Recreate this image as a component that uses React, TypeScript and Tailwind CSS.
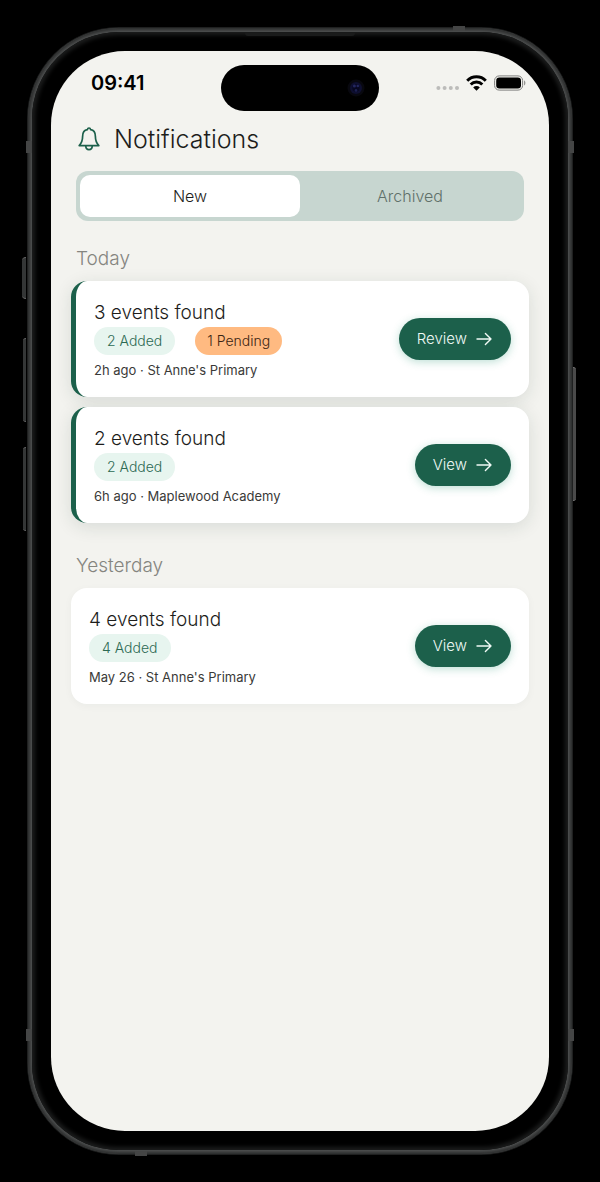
import { useState } from "react";

type Item = {
  id: number;
  title: string;
  added: number;
  pending?: number;
  meta: string;
  action: string;
  unread: boolean;
};

const groups: { label: string; items: Item[] }[] = [
  {
    label: "Today",
    items: [
      {
        id: 1,
        title: "3 events found",
        added: 2,
        pending: 1,
        meta: "2h ago · St Anne's Primary",
        action: "Review",
        unread: true,
      },
      {
        id: 2,
        title: "2 events found",
        added: 2,
        meta: "6h ago · Maplewood Academy",
        action: "View",
        unread: true,
      },
    ],
  },
  {
    label: "Yesterday",
    items: [
      {
        id: 3,
        title: "4 events found",
        added: 4,
        meta: "May 26 · St Anne's Primary",
        action: "View",
        unread: false,
      },
    ],
  },
];

function StatusBar() {
  return (
    <div className="flex items-center justify-between pt-[14px] pr-[23px] pl-10">
      <span className="w-[130px] pb-[10px] text-[20px] leading-6 font-semibold text-black">
        09:41
      </span>
      {/* dynamic island */}
      <div className="flex h-[46px] w-[158px] items-center justify-end rounded-full bg-black pr-[14px]">
        <svg aria-hidden viewBox="0 0 18 18" className="h-[18px] w-[18px]">
          <circle cx="9" cy="9" r="8.5" fill="#08080f" />
          <circle cx="9" cy="9" r="6" fill="#0e0f30" />
          <circle cx="9" cy="9" r="3.6" fill="#070720" />
          <circle cx="7.4" cy="7" r="1.5" fill="#23265e" />
          <circle cx="10.8" cy="7" r="1.3" fill="#23265e" />
          <circle cx="9" cy="11.4" r="1.3" fill="#1c2050" />
        </svg>
      </div>
      <div className="flex w-[147px] items-center justify-end gap-[7px] pb-[10px]">
        <svg aria-hidden viewBox="0 0 23 16" className="h-4 w-[23px]" fill="#bcbcba">
          <circle cx="2.4" cy="13" r="2" />
          <circle cx="8.6" cy="13" r="2" />
          <circle cx="14.8" cy="13" r="2" />
          <circle cx="21" cy="13" r="2" />
        </svg>
        <svg
          aria-hidden
          viewBox="0 0 21 16"
          className="h-4 w-[21px]"
          fill="none"
          stroke="#000"
          strokeWidth="3"
        >
          <path d="M1.2 5.7a13.2 13.2 0 0 1 18.6 0" />
          <path d="M4.7 9.5a8.2 8.2 0 0 1 11.6 0" />
          <path d="M10.5 15.8 7.2 12.5a4.6 4.6 0 0 1 6.6 0z" fill="#000" stroke="none" />
        </svg>
        <svg aria-hidden viewBox="0 0 32 16" className="h-4 w-8">
          <rect x="0.6" y="0.9" width="28" height="14.2" rx="4.6" fill="none" stroke="#7f7f7d" />
          <rect x="2.2" y="2.6" width="24.8" height="10.8" rx="3.2" fill="#000" />
          <path d="M30.2 5.6c1.5.6 1.5 4.2 0 4.8z" fill="#7f7f7d" />
        </svg>
      </div>
    </div>
  );
}

function Card({ item }: { item: Item }) {
  return (
    <li
      className={
        item.unread
          ? "flex items-center justify-between rounded-2xl border-l-[5px] border-[#1c604b] bg-white px-[18px] shadow-[0_4px_18px_rgba(28,50,40,0.12)]"
          : "flex items-center justify-between rounded-2xl bg-white px-[18px] shadow-[0_2px_8px_rgba(28,50,40,0.04)]"
      }
    >
      <div className="pt-[18px] pb-3">
        <h3 className="text-[19px] leading-7 text-[#1d1d1b]">{item.title}</h3>
        <div className="flex gap-5 text-[14px] leading-7">
          <span className="rounded-full bg-[#e7f5ef] px-[13px] text-[#2c6a53]">
            {item.added} Added
          </span>
          {item.pending && (
            <span className="rounded-full bg-[#ffba81] px-3 text-[#3a2412]">
              {item.pending} Pending
            </span>
          )}
        </div>
        <p className="text-[13px] leading-[30px] font-normal text-[#3a3a38]">{item.meta}</p>
      </div>
      <button
        type="button"
        className="flex h-[42px] items-center gap-2 rounded-full bg-[#1c604b] px-[18px] text-[15px] text-[#f0faf6] shadow-[0_2px_8px_rgba(40,150,115,0.3)]"
      >
        {item.action}
        <svg
          aria-hidden
          viewBox="0 0 18 18"
          className="h-[18px] w-[18px]"
          fill="none"
          stroke="currentColor"
          strokeWidth="1.4"
          strokeLinecap="round"
          strokeLinejoin="round"
        >
          <path d="M2 9h14M10.4 3.4 16 9l-5.6 5.6" />
        </svg>
      </button>
    </li>
  );
}

export default function App() {
  const [tab, setTab] = useState("New");

  return (
    <div className="flex min-h-screen bg-black p-[27px] font-['Inter','Liberation_Sans',sans-serif] font-light">
      {/* phone body */}
      <div className="relative flex flex-1 rounded-[92px] bg-[#1f2020] p-px">
        <div className="absolute top-[230px] -left-[5px] h-[42px] w-1 rounded-l-sm border-y border-[#666] bg-[#343636]" />
        <div className="absolute top-[311px] -left-1 h-[84px] w-[3px] rounded-l-sm border-y border-[#666] bg-[#343636]" />
        <div className="absolute top-[420px] -left-1 h-[84px] w-[3px] rounded-l-sm border-y border-[#666] bg-[#343636]" />
        <div className="absolute top-[340px] -right-[3px] h-[134px] w-[3px] rounded-r-sm border-y border-[#777] bg-[#4a4a4a]" />
        {/* antenna bands */}
        <div className="absolute top-[114px] -left-px h-3 w-[6px] bg-[#444545]" />
        <div className="absolute top-[114px] -right-px h-3 w-[6px] bg-[#444545]" />
        <div className="absolute bottom-[114px] -left-px h-3 w-[6px] bg-[#444545]" />
        <div className="absolute -right-px bottom-[114px] h-3 w-[6px] bg-[#444545]" />
        <div className="absolute -top-px right-[108px] h-[5px] w-3 bg-[#444545]" />
        <div className="absolute -bottom-px left-[108px] h-[5px] w-3 bg-[#444545]" />

        <div className="flex flex-1 rounded-[91px] bg-[#4e5050] p-1 shadow-[inset_0_0_3px_2px_#2c2d2d]">
          <div className="relative flex flex-1 rounded-[87px] bg-black p-[19px] shadow-[inset_0_0_4px_3px_#1c1d1d]">
            {/* earpiece */}
            <div className="absolute inset-x-0 top-px mx-auto h-[3px] w-[110px] rounded-b-sm bg-[#1a1b1b]" />
            <main className="flex-1 rounded-[74px] bg-[#f3f3ef]">
              <StatusBar />

              <div className="px-5">
                <header className="flex items-center gap-3 px-[5px] pt-2">
                  <svg
                    aria-hidden
                    viewBox="0 0 26 26"
                    className="h-[26px] w-[26px]"
                    fill="none"
                    stroke="#1c604b"
                    strokeWidth="1.7"
                    strokeLinecap="round"
                    strokeLinejoin="round"
                  >
                    <path d="M3.2 19.6c1.8-1.9 3.4-4.6 3.4-9.1 0-4 2.2-6.4 4.8-6.8.2-1.2.8-1.7 1.6-1.7s1.4.5 1.6 1.7c2.6.4 4.8 2.8 4.8 6.8 0 4.5 1.6 7.2 3.4 9.1z" />
                    <path d="M9.8 20c0 2.1 1.3 3.6 3.2 3.6s3.2-1.5 3.2-3.6" />
                  </svg>
                  <h1 className="text-[25px] leading-10 text-[#1d1d1b]">Notifications</h1>
                </header>

                <div
                  role="tablist"
                  className="mx-[5px] mt-3 flex rounded-xl bg-[#c7d6d0] p-1 text-[16px]"
                >
                  {["New", "Archived"].map((name) => (
                    <button
                      key={name}
                      type="button"
                      role="tab"
                      aria-selected={tab === name}
                      onClick={() => setTab(name)}
                      className={
                        tab === name
                          ? "h-[42px] flex-1 rounded-[10px] bg-white text-[#1d1d1b]"
                          : "h-[42px] flex-1 rounded-[10px] text-[#5f7069]"
                      }
                    >
                      {name}
                    </button>
                  ))}
                </div>

                {groups.map((group) => (
                  <section key={group.label} className="pt-[22px] pb-[5px]">
                    <h2 className="px-[5px] text-[19px] leading-8 text-[#85857f]">
                      {group.label}
                    </h2>
                    <ul className="mt-[6px] flex flex-col gap-[10px]">
                      {group.items.map((item) => (
                        <Card key={item.id} item={item} />
                      ))}
                    </ul>
                  </section>
                ))}
              </div>
            </main>
          </div>
        </div>
      </div>
    </div>
  );
}
